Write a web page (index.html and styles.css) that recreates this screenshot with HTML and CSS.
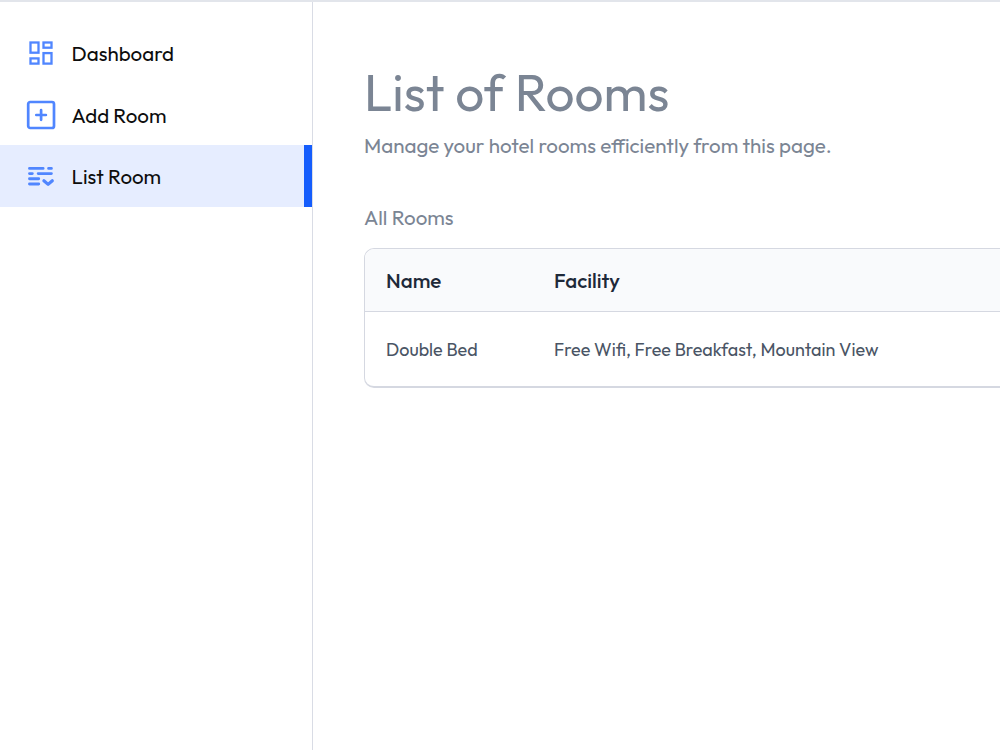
FILE: index.html
```html
<!DOCTYPE html>
<html lang="en">
<head>
    <meta charset="UTF-8">
    <meta name="viewport" content="width=device-width, initial-scale=1.0">
    <title>List of Rooms</title>
    <link rel="stylesheet" href="styles.css">
</head>
<body>

    <aside class="sidebar">
        <a class="nav-item" href="#">
            <svg class="nav-icon" viewBox="0 0 30 30" fill="none" stroke="#5086ff" stroke-width="2.3">
                <rect x="4.5" y="4.5" width="8" height="10.2"/>
                <rect x="17.5" y="4.5" width="8" height="5.2"/>
                <rect x="4.5" y="20.4" width="8" height="5.2"/>
                <rect x="17.5" y="15.1" width="8" height="10.5"/>
            </svg>
            <span class="nav-label">Dashboard</span>
        </a>
        <a class="nav-item" href="#">
            <svg class="nav-icon" viewBox="0 0 30 30" fill="none" stroke="#5086ff" stroke-width="2.7" stroke-linecap="round">
                <rect x="2.2" y="2" width="25.8" height="26" rx="2"/>
                <path d="M15.1 10.2v9.6M10.3 15h9.6"/>
            </svg>
            <span class="nav-label">Add Room</span>
        </a>
        <a class="nav-item active" href="#">
            <svg class="nav-icon" viewBox="0 0 30 30" fill="none" stroke="#5086ff" stroke-width="2.9" stroke-linecap="round" stroke-linejoin="round">
                <path d="M3.5 7.4h13.6M22.6 7.4h2.8M3.5 12.6h2.8M12.2 12.6h13.2M3.5 17.8h9.2M3.5 23h9.2"/>
                <path stroke-width="3.2" d="M17.9 19.8l4.2 3.6 4.2-3.6"/>
            </svg>
            <span class="nav-label">List Room</span>
        </a>
    </aside>

    <main class="content">
        <h1>List of Rooms</h1>
        <p class="subtitle">Manage your hotel rooms efficiently from this page.</p>
        <p class="table-title">All Rooms</p>

        <div class="room-table">
            <div class="row head">
                <span class="name">Name</span>
                <span class="facility">Facility</span>
            </div>
            <div class="row">
                <span class="name">Double Bed</span>
                <span class="facility">Free Wifi, Free Breakfast, Mountain View</span>
            </div>
        </div>
    </main>

</body>
</html>
```
FILE: styles.css
```css
* {
    box-sizing: border-box;
}

body {
    font-family: 'Outfit', 'Lato', sans-serif;
    background: #fff;
    margin: 0;
    height: 100vh;
    display: flex;
    overflow: hidden;
    border-top: 2px solid #e2e5eb;
}

.sidebar {
    width: 313px;
    flex-shrink: 0;
    padding-top: 20px;
    border-right: 1px solid #d9dce5;
}

.nav-item {
    display: flex;
    align-items: center;
    height: 61.7px;
    padding-left: 26px;
    gap: 15.6px;
    color: #0d0d0d;
    font-size: 20.5px;
    line-height: 26px;
    font-weight: 400;
    text-decoration: none;
    white-space: nowrap;
}

.nav-item.active {
    background: #e6edff;
    border-right: 8px solid #155dfc;
}

.nav-icon {
    width: 30px;
    height: 30px;
}

.content {
    flex: 1;
    padding: 58px 0 0 51px;
    white-space: nowrap;
    color: #7b8594;
}

h1 {
    margin: 0;
    font-size: 51.3px;
    line-height: 64px;
    font-weight: 400;
}

.subtitle {
    margin: 7px 0 0;
    font-size: 20.55px;
    line-height: 28px;
}

.table-title {
    margin: 44px 0 0;
    font-size: 20.55px;
    line-height: 28px;
}

.room-table {
    margin-top: 17px;
    height: 140px;
    border: 1px solid #d5d8e1;
    border-bottom-width: 2px;
    border-right: none;
    border-radius: 10px 0 0 10px;
    overflow: hidden;
}

.row {
    display: grid;
    grid-template-columns: 168px 1fr;
    align-items: center;
    height: 75px;
    padding-left: 21px;
    font-size: 17.95px;
    color: #4a5565;
}

.row.head {
    height: 63px;
    background: #f9fafc;
    border-bottom: 1px solid #d5d8e1;
    font-size: 20.55px;
    font-weight: 500;
    color: #1e2939;
}
```
